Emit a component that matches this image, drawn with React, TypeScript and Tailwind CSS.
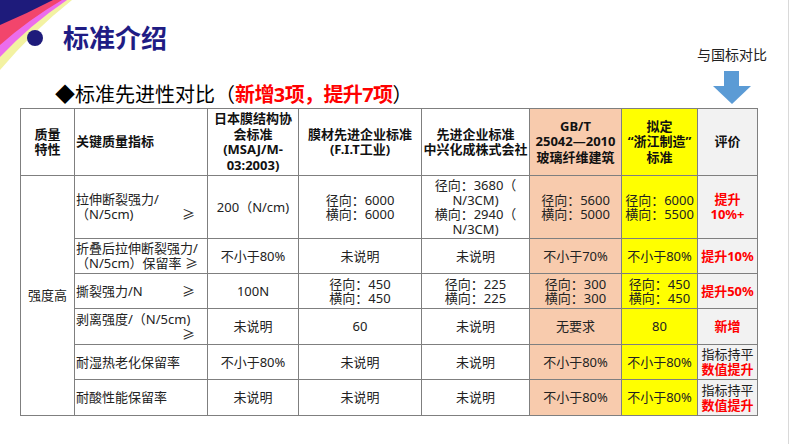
import React from "react";

const FONT = "font-['Noto_Sans','Noto_Sans_CJK_SC',sans-serif]";
const CELL = "border border-[#7f7f7f] p-0 align-middle";

type Row = {
  h: string;
  ind: [string, string][];
  indPr?: string;
  jp: string[];
  fit: string[];
  xing: string[];
  gb: string[];
  zj: string[];
  ev: { text: string; red: boolean }[];
};

const ROWS: Row[] = [
  {
    h: "h-[63px]",
    ind: [["拉伸断裂强力/", ""], ["（N/5cm)", "≥"]],
    jp: ["200（N/cm)"],
    fit: ["径向：6000", "横向：6000"],
    xing: ["径向：3680（", "N/3CM)", "横向：2940（", "N/3CM)"],
    gb: ["径向：5600", "横向：5000"],
    zj: ["径向：6000", "横向：5500"],
    ev: [{ text: "提升", red: true }, { text: "10%+", red: true }],
  },
  {
    h: "h-[35px]",
    ind: [["折叠后拉伸断裂强力/", ""], ["（N/5cm）保留率", "≥"]],
    indPr: "pr-[9px]",
    jp: ["不小于80%"],
    fit: ["未说明"],
    xing: ["未说明"],
    gb: ["不小于70%"],
    zj: ["不小于80%"],
    ev: [{ text: "提升10%", red: true }],
  },
  {
    h: "h-[35px]",
    ind: [["撕裂强力/N", "≥"]],
    jp: ["100N"],
    fit: ["径向：450", "横向：450"],
    xing: ["径向：225", "横向：225"],
    gb: ["径向：300", "横向：300"],
    zj: ["径向：450", "横向：450"],
    ev: [{ text: "提升50%", red: true }],
  },
  {
    h: "h-[36px]",
    ind: [["剥离强度/（N/5cm)", ""], ["", "≥"]],
    jp: ["未说明"],
    fit: ["60"],
    xing: ["未说明"],
    gb: ["无要求"],
    zj: ["80"],
    ev: [{ text: "新增", red: true }],
  },
  {
    h: "h-[35px]",
    ind: [["耐湿热老化保留率", ""]],
    jp: ["不小于80%"],
    fit: ["未说明"],
    xing: ["未说明"],
    gb: ["不小于80%"],
    zj: ["不小于80%"],
    ev: [{ text: "指标持平", red: false }, { text: "数值提升", red: true }],
  },
  {
    h: "h-[36px]",
    ind: [["耐酸性能保留率", ""]],
    jp: ["未说明"],
    fit: ["未说明"],
    xing: ["未说明"],
    gb: ["不小于80%"],
    zj: ["不小于80%"],
    ev: [{ text: "指标持平", red: false }, { text: "数值提升", red: true }],
  },
];

function Lines({ lines }: { lines: string[] }) {
  return (
    <div className="flex flex-col items-center text-[13px] leading-[14.5px] text-[#222]">
      {lines.map((l, i) => (
        <span key={i} className="whitespace-nowrap">{l}</span>
      ))}
    </div>
  );
}

// slide corner ribbons
function Corner() {
  return (
    <svg className="absolute top-0 left-0" width="80" height="76" viewBox="0 0 80 76">
      <path d="M0,0 L72,0 Q34,30 0,70 Z" fill="#f3f2a2" />
      <path d="M0,0 L67,0 Q30,25 0,57 Z" fill="#ec6cec" />
      <path d="M0,0 L62,0 Q28,20 0,45 Z" fill="#f2456c" />
      <path d="M0,0 L53,0 Q26,14 0,25 Z" fill="#1e1b7b" />
    </svg>
  );
}

export default function App() {
  return (
    <div className={`relative w-[790px] h-[444px] overflow-hidden bg-white ${FONT}`}>
      <div className="w-[789px] h-[444px] border-r border-[#d9d9d9]">
        <Corner />

        {/* top area */}
        <div className="flex h-[108px]">
          <div className="flex-1 flex flex-col">
            <div className="relative mt-[18px] h-[40px] flex items-center">
              <span className="ml-[27px] w-[16px] h-[16px] rounded-full bg-[#1e1b7b]" />
              <span className="ml-[20px] text-[26px] leading-none font-bold text-[#1f1c84]">标准介绍</span>
            </div>
            <div className="mt-[24px] h-[26px] pl-[55px] text-[20px] leading-[26px] text-black whitespace-nowrap">
              ◆标准先进性对比（<span className="font-bold text-[#ff0000] tracking-[-0.6px]">新增3项，提升7项</span>）
            </div>
          </div>
          <div className="w-[80px] mr-[16px] flex flex-col items-center">
            <span className="mt-[45px] text-[14px] leading-[20px] text-[#222] whitespace-nowrap">与国标对比</span>
            <svg className="mt-[6px]" width="40" height="34" viewBox="0 0 40 34">
              <rect x="12" y="0" width="15" height="16" fill="#5b9bd5" />
              <polygon points="1,15 39,15 20,33" fill="#5b9bd5" />
            </svg>
          </div>
        </div>

        {/* comparison table */}
        <table className="ml-[20px] w-[737px] table-fixed border-collapse">
          <colgroup>
            <col className="w-[54px]" />
            <col className="w-[133px]" />
            <col className="w-[91px]" />
            <col className="w-[123px]" />
            <col className="w-[108px]" />
            <col className="w-[92px]" />
            <col className="w-[76px]" />
            <col className="w-[60px]" />
          </colgroup>
          <thead>
            <tr className="h-[67px] text-[13px] leading-[15.5px] font-bold text-[#111]">
              <th className={`${CELL} text-center`}>质量<br />特性</th>
              <th className={`${CELL} text-left pl-[1px]`}>关键质量指标</th>
              <th className={`${CELL} text-center`}>日本膜结构协<br />会标准<br />(MSAJ/M-<br />03:2003)</th>
              <th className={`${CELL} text-center`}>膜材先进企业标准<br />(F.I.T工业)</th>
              <th className={`${CELL} text-center`}>先进企业标准<br />中兴化成株式会社</th>
              <th className={`${CELL} text-center bg-[#f8cbad]`}>GB/T<br />25042—2010<br />玻璃纤维建筑</th>
              <th className={`${CELL} text-center bg-[#ffff00]`}>拟定<br />“浙江制造”<br />标准</th>
              <th className={`${CELL} text-center bg-[#f2f2f2]`}>评价</th>
            </tr>
          </thead>
          <tbody>
            {ROWS.map((r, i) => (
              <tr key={i} className={r.h}>
                {i === 0 && (
                  <td rowSpan={6} className={`${CELL} text-center text-[13px] text-[#222]`}>
                    强度高
                  </td>
                )}
                <td className={CELL}>
                  <div className={`flex flex-col pl-[1px] ${r.indPr ?? "pr-[12px]"} text-[13px] leading-[15px] text-[#222]`}>
                    {r.ind.map(([t, s], j) => (
                      <div key={j} className="flex justify-between whitespace-nowrap">
                        <span>{t}</span>
                        <span>{s}</span>
                      </div>
                    ))}
                  </div>
                </td>
                <td className={CELL}><Lines lines={r.jp} /></td>
                <td className={CELL}><Lines lines={r.fit} /></td>
                <td className={CELL}><Lines lines={r.xing} /></td>
                <td className={`${CELL} bg-[#f8cbad]`}><Lines lines={r.gb} /></td>
                <td className={`${CELL} bg-[#ffff00]`}><Lines lines={r.zj} /></td>
                <td className={`${CELL} bg-[#f2f2f2]`}>
                  <div className="flex flex-col items-center text-[13px] leading-[15px]">
                    {r.ev.map((e, j) => (
                      <span
                        key={j}
                        className={`whitespace-nowrap ${e.red ? "font-bold text-[#ff0000]" : "text-[#222]"}`}
                      >
                        {e.text}
                      </span>
                    ))}
                  </div>
                </td>
              </tr>
            ))}
          </tbody>
        </table>
      </div>
    </div>
  );
}
